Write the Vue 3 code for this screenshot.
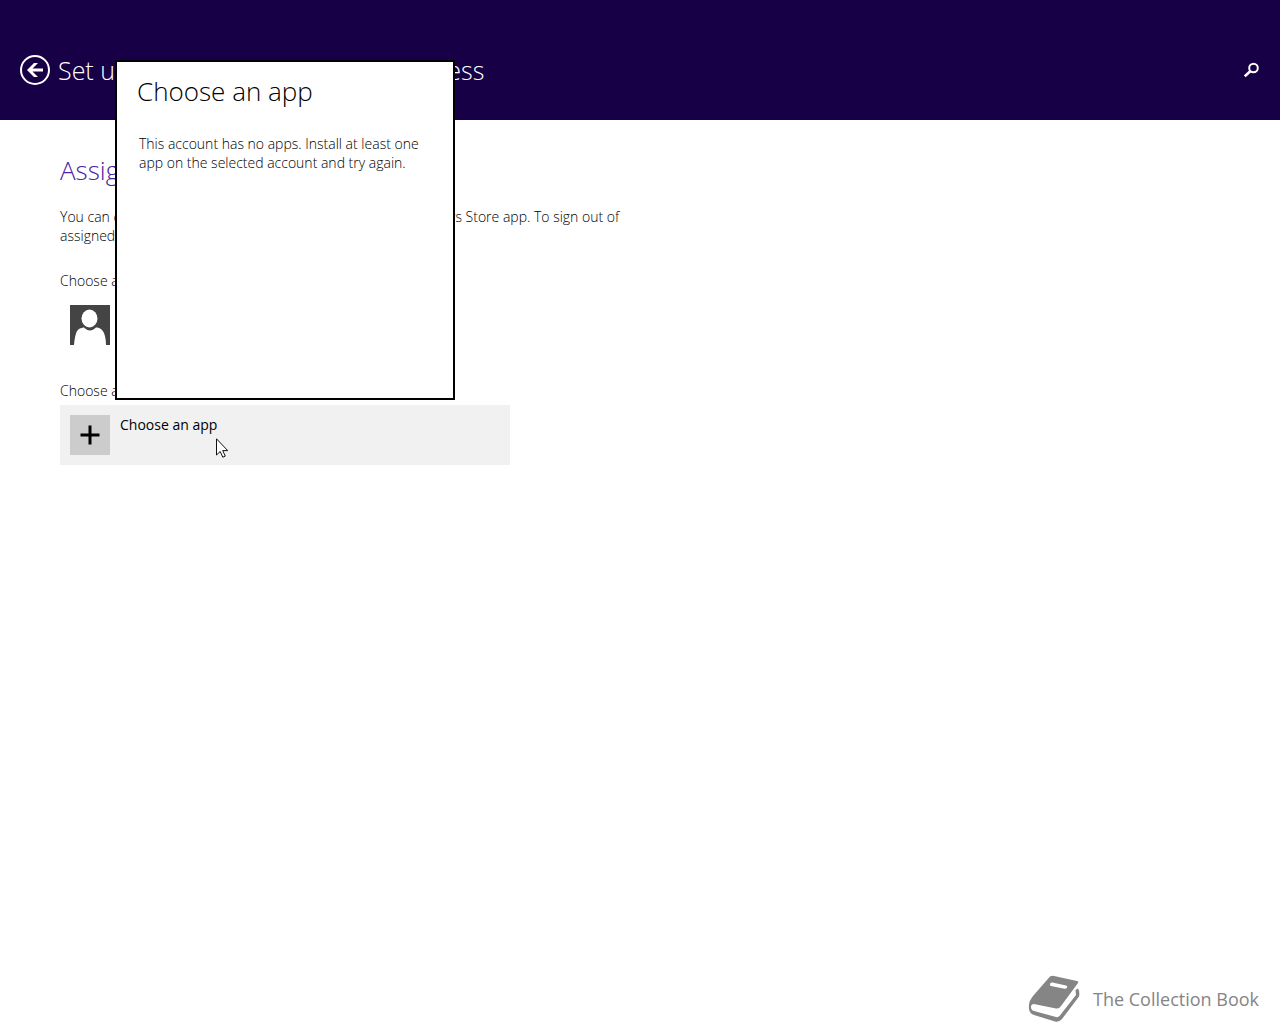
<script setup>
import { ref } from 'vue'

const title = 'Set up an account for assigned access'
const dialogOpen = ref(true)
</script>

<template>
  <div class="page">
    <header class="topbar">
      <button class="icon-button" type="button" aria-label="Back">
        <svg width="30" height="30" viewBox="0 0 30 30" fill="none">
          <circle cx="15" cy="15" r="14" stroke="#fff" stroke-width="2" />
          <path d="M7 15 14 8h4l-5.500 5.500H23v3H12.500L18 22h-4z" fill="#fff" />
        </svg>
      </button>
      <h1>{{ title }}</h1>
      <button class="icon-button search" type="button" aria-label="Search">
        <svg width="16" height="16" viewBox="0 0 16 16" fill="none" stroke="#fff">
          <circle cx="9.500" cy="6" r="4.300" stroke-width="2" />
          <path d="M6.500 9 .8 14.300" stroke-width="2.600" />
        </svg>
      </button>
    </header>

    <main class="content">
      <h2>Assigned access</h2>
      <p class="intro">
        You can choose an account to have access to only one Windows Store app. To sign out of
        assigned access, press the Windows logo key five times quickly.
      </p>

      <p class="label">Choose an account</p>
      <button class="tile" type="button" aria-label="Selected account">
        <svg width="40" height="40" viewBox="0 0 40 40">
          <path d="M0 0h40v40H0z" fill="#444" />
          <ellipse cx="19.500" cy="13.500" rx="8" ry="9" fill="#fff" />
          <path d="M4 40c1-9 2-14 5-16 2-1 4-1.500 5-1.500 4 4 8 4 12 0 2 0 4 .5 6 2.500 2 2 4 7 4 15z" fill="#fff" />
        </svg>
      </button>

      <p class="label">Choose an app</p>
      <button class="tile picker" type="button" @click="dialogOpen = true">
        <svg width="40" height="40" viewBox="0 0 40 40">
          <path d="M0 0h40v40H0z" fill="#ccc" />
          <path d="M10.500 20h19M20 10.500v19" stroke="#000" stroke-width="3" />
        </svg>
        <span>Choose an app</span>
        <svg class="pointer" width="13" height="20" viewBox="0 0 13 20" aria-hidden="true">
          <path d="M.5.800v16.200l3.700-3.500 2.600 5.700 2.500-1.100-2.600-5.500h5z" fill="#fff" stroke="#111" />
        </svg>
      </button>
    </main>

    <footer class="brand">
      <svg width="52" height="48" viewBox="0 0 52 48">
        <path d="M22 1.500Q24 .5 26 1L49 6q2 .5 1 2L33 31q-2 3-5 2.400L6 29q-3 0-3 3 0 3 3 4l22 6q2 .5 3.500-1L48 20l-.5-5 2.500-1.500q2 3 1 8L34 44q-3 3.500-7 2.500L6 40Q0 38 1 30 1 26 5 21z" fill="#858585" />
        <path d="M22.500 8q1-.8 2-.5L38 10.500q2 .6 1 2-.8 1.500-2.500 1.200L23 11q-2-.6-.5-3z" fill="#fff" />
      </svg>
      <span>The Collection Book</span>
    </footer>

    <section v-if="dialogOpen" class="dialog" role="dialog" aria-labelledby="dialog-title">
      <h2 id="dialog-title">Choose an app</h2>
      <p>This account has no apps. Install at least one app on the selected account and try again.</p>
    </section>
  </div>
</template>

<style>
body {
  margin: 0;
  background: #fff;
}
</style>

<style scoped>
.page {
  position: relative;
  display: flex;
  flex-direction: column;
  min-height: 100vh;
  color: #000;
  font: 300 14px/19px "Open Sans", "Noto Sans", sans-serif;
}

h1,
h2,
p {
  margin: 0;
}

h1,
h2 {
  font-size: 26px;
  line-height: 36px;
  font-weight: 300;
}

h1 {
  font-size: 25px;
}

button {
  padding: 0;
  border: 0;
  background: none;
  color: inherit;
  font: inherit;
  text-align: left;
}

svg {
  display: block;
  flex: none;
}

.topbar {
  display: flex;
  align-items: center;
  gap: 8px;
  box-sizing: border-box;
  height: 120px;
  padding: 20px 20px 0;
  background: #180046;
  color: #fff;
}

.search {
  margin-left: auto;
}

.content {
  padding: 32px 60px;
}

.content h2 {
  color: #4a24a0;
}

.intro {
  max-width: 580px;
  margin: 19px 0 26px;
}

.label {
  margin-bottom: 5px;
}

.tile {
  position: relative;
  display: flex;
  gap: 10px;
  box-sizing: border-box;
  width: 100%;
  max-width: 450px;
  padding: 10px;
  margin-bottom: 26px;
}

.picker {
  background: #f1f1f1;
  font-weight: 400;
}

.pointer {
  position: absolute;
  left: 156px;
  top: 33px;
}

.brand {
  display: flex;
  align-items: center;
  justify-content: flex-end;
  gap: 13px;
  margin-top: auto;
  padding: 0 21px 1px;
  color: #858585;
  font-size: 18px;
  font-weight: 400;
}

.dialog {
  position: absolute;
  left: 115px;
  top: 60px;
  box-sizing: border-box;
  width: 340px;
  min-height: 340px;
  padding: 11px 20px;
  border: 2px solid #000;
  background: #fff;
}

.dialog p {
  margin: 25px 2px 0;
}
</style>
